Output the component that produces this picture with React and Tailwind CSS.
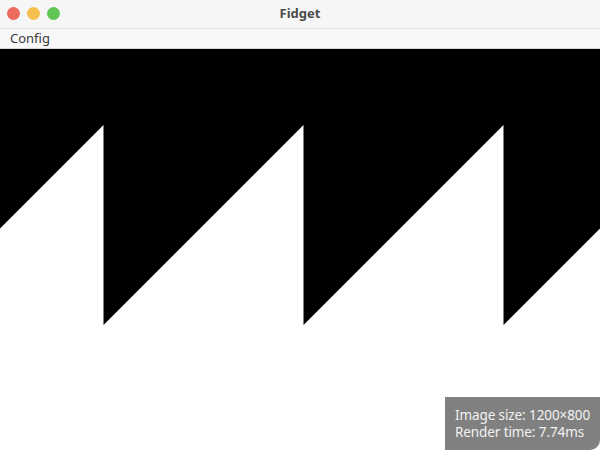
export default function App() {
  return (
    <div className="w-[600px] h-[450px] flex flex-col bg-white overflow-hidden font-['Noto_Sans',sans-serif]">
      {/* title bar */}
      <div className="relative h-[29px] shrink-0 flex items-center justify-center bg-[#f6f6f6] border-b border-[#e2e2e2]">
        <div className="absolute left-[7px] top-[7px] flex gap-[7px]">
          <span className="w-[13px] h-[13px] rounded-full bg-[#ed6a5e]" />
          <span className="w-[13px] h-[13px] rounded-full bg-[#f5bf4f]" />
          <span className="w-[13px] h-[13px] rounded-full bg-[#61c554]" />
        </div>
        <span className="text-[13px] font-bold text-[#4c4c4c]">Fidget</span>
      </div>

      {/* menu */}
      <div className="h-[20px] shrink-0 flex items-center px-[10px] bg-[#f8f8f8] border-b border-[#d8d8d8]">
        <span className="text-[13px] text-[#3a3a3a] leading-none">Config</span>
      </div>

      {/* canvas */}
      <div className="relative flex-1">
        <svg viewBox="0 0 600 401" className="block w-full h-full" preserveAspectRatio="none">
          <polygon
            fill="#000"
            points="0,0 600,0 600,179.5 503.5,276 503.5,76 303.5,276 303.5,76 103.5,276 103.5,76 0,179.5"
          />
        </svg>
        <div className="absolute right-0 bottom-0 w-[155px] h-[53px] bg-[#808080] rounded-br-[10px] pl-[10px] pt-[10px] text-[13.5px] tracking-[-0.1px] leading-[17px] text-[#f2f2f2] whitespace-nowrap">
          <div>Image size: 1200×800</div>
          <div>Render time: 7.74ms</div>
        </div>
      </div>
    </div>
  )
}
